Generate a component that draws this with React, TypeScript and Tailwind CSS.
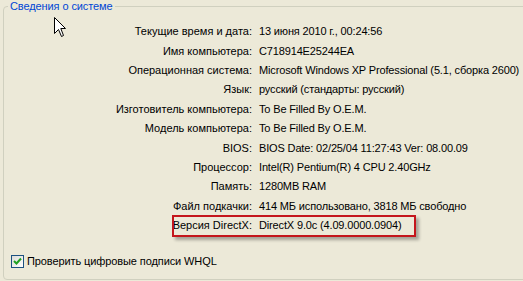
const rows: [string, string][] = [
  ["Текущие время и дата:", "13 июня 2010 г., 00:24:56"],
  ["Имя компьютера:", "C718914E25244EA"],
  ["Операционная система:", "Microsoft Windows XP Professional (5.1, сборка 2600)"],
  ["Язык:", "русский (стандарты: русский)"],
  ["Изготовитель компьютера:", "To Be Filled By O.E.M."],
  ["Модель компьютера:", "To Be Filled By O.E.M."],
  ["BIOS:", "BIOS Date: 02/25/04 11:27:43 Ver: 08.00.09"],
  ["Процессор:", "Intel(R) Pentium(R) 4 CPU 2.40GHz"],
  ["Память:", "1280MB RAM"],
  ["Файл подкачки:", "414 МБ использовано, 3818 МБ свободно"],
  ["Версия DirectX:", "DirectX 9.0c (4.09.0000.0904)"],
];

function Cursor() {
  return (
    <svg className="absolute left-[54px] top-[17px]" width="13" height="21" viewBox="0 0 13 21">
      <path
        d="M0.5 0.5 L0.5 16.5 L4.5 12.5 L7.5 19.5 L9.5 18.5 L6.8 11.5 L11.5 11.5 Z"
        fill="#fff"
        stroke="#000"
        strokeWidth="1"
        strokeLinejoin="miter"
      />
    </svg>
  );
}

function Checkbox() {
  return (
    <span className="w-[13px] h-[13px] border border-[#1c5180] bg-gradient-to-br from-[#dcdcd7] to-white flex items-center justify-center">
      <svg width="9" height="9" viewBox="0 0 9 9">
        <path d="M1 4 L3.5 6.5 L8 1.5" fill="none" stroke="#21a121" strokeWidth="2" />
      </svg>
    </span>
  );
}

export default function App() {
  return (
    <div className="relative w-[523px] h-[281px] overflow-hidden bg-[#ece9d8] text-black text-[11px] leading-[13px] font-['Liberation_Sans',Arial,sans-serif]">
      <fieldset className="ml-[3px] w-[540px] border border-[#d0d0bf] rounded-[4px] pb-[11px] m-0 p-0">
        <legend className="ml-[4px] px-[2px] text-[#0046d5] leading-[13px] tracking-[-0.1px]">Сведения о системе</legend>

        <div className="pt-[9px]">
          {rows.map(([label, value], i) => (
            <div key={label} className="relative grid grid-cols-[248px_1fr] gap-x-[7px] h-[19.4px] items-center">
              <span className="text-right whitespace-nowrap">{label}</span>
              <span className="whitespace-nowrap tracking-[-0.15px]">{value}</span>
              {i === rows.length - 1 && (
                <span className="absolute left-[168px] top-[-1px] w-[244px] h-[22px] border-2 border-[#c4161c] shadow-[3px_3px_3px_rgba(0,0,0,0.3)]" />
              )}
            </div>
          ))}
        </div>

        <label className="mt-[20px] ml-[7px] flex items-center gap-[3px]">
          <Checkbox />
          <span className="tracking-[-0.1px]">Проверить цифровые подписи WHQL</span>
        </label>
      </fieldset>

      <Cursor />
    </div>
  );
}
